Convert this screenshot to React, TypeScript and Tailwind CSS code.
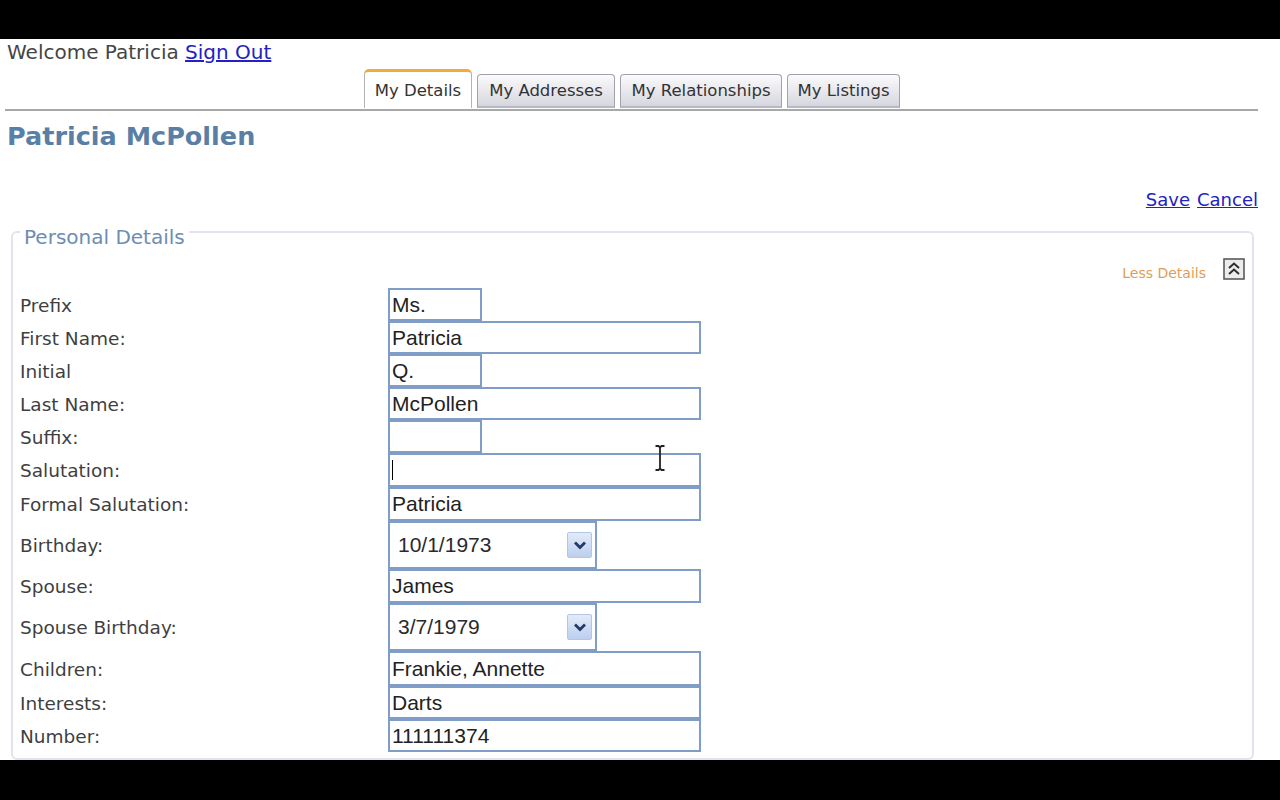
import React from 'react'

type Field = {
  label: string
  value: string
  kind: 'short' | 'long' | 'date'
  h: string
  caret?: boolean
}

const fields: Field[] = [
  { label: 'Prefix', value: 'Ms.', kind: 'short', h: 'h-[33px]' },
  { label: 'First Name:', value: 'Patricia', kind: 'long', h: 'h-[33px]' },
  { label: 'Initial', value: 'Q.', kind: 'short', h: 'h-[33px]' },
  { label: 'Last Name:', value: 'McPollen', kind: 'long', h: 'h-[33px]' },
  { label: 'Suffix:', value: '', kind: 'short', h: 'h-[33px]' },
  { label: 'Salutation:', value: '', kind: 'long', h: 'h-[34px]', caret: true },
  { label: 'Formal Salutation:', value: 'Patricia', kind: 'long', h: 'h-[34px]' },
  { label: 'Birthday:', value: '10/1/1973', kind: 'date', h: 'h-[48px]' },
  { label: 'Spouse:', value: 'James', kind: 'long', h: 'h-[34px]' },
  { label: 'Spouse Birthday:', value: '3/7/1979', kind: 'date', h: 'h-[48px]' },
  { label: 'Children:', value: 'Frankie, Annette', kind: 'long', h: 'h-[35px]' },
  { label: 'Interests:', value: 'Darts', kind: 'long', h: 'h-[33px]' },
  { label: 'Number:', value: '111111374', kind: 'long', h: 'h-[33px]' },
]

const tabs = [
  { name: 'My Details', w: 'w-[108px]', active: true },
  { name: 'My Addresses', w: 'w-[138px]', active: false },
  { name: 'My Relationships', w: 'w-[162px]', active: false },
  { name: 'My Listings', w: 'w-[113px]', active: false },
]

const inputCls =
  "h-full border-2 border-[#7f9dc7] bg-white pl-[2px] text-[21px] text-[#222] font-['Liberation_Sans',Arial,sans-serif] outline-none"

function DateBox({ value }: { value: string }) {
  return (
    <div className="flex h-full w-[209px] items-center justify-between border-2 border-[#7f9dc7] bg-white pl-[8px] pr-[3px]">
      <span className="text-[21px] text-[#2a2a2a] font-['Liberation_Sans',Arial,sans-serif]">{value}</span>
      <span className="flex h-[26px] w-[25px] items-center justify-center rounded-[2px] border border-[#b4c6e4] bg-gradient-to-b from-[#e2ebfa] to-[#bccfee]">
        <svg width="16" height="12" viewBox="0 0 16 12">
          <path d="M3 3.5 L8 8.5 L13 3.5" fill="none" stroke="#24386a" strokeWidth="2.8" />
        </svg>
      </span>
    </div>
  )
}

function FieldInput({ f }: { f: Field }) {
  if (f.kind === 'date') return <DateBox value={f.value} />
  const w = f.kind === 'short' ? 'w-[94px]' : 'w-[313px]'
  return (
    <div className={`relative h-full ${w}`}>
      <input readOnly value={f.value} className={`${inputCls} w-full`} />
      {f.caret ? <span className="absolute left-[4px] top-[7px] h-[20px] w-px bg-black" /> : null}
    </div>
  )
}

export default function App() {
  return (
    <div className="h-[800px] w-[1280px] overflow-hidden bg-black font-['DejaVu_Sans',Verdana,sans-serif]">
      <div className="h-[39px] bg-black" />

      <div className="relative h-[721px] overflow-hidden bg-white">
        {/* welcome */}
        <div className="pl-[7px] text-[20px] leading-[26px] text-[#454545]">
          Welcome Patricia{' '}
          <a href="#" className="text-[#2121c4] underline">Sign Out</a>
        </div>

        {/* tabs */}
        <div className="ml-[5px] mr-[22px] mt-[4px] flex items-end gap-[5px] border-b-2 border-[#a8a8a8] pb-[1px] pl-[359px]">
          {tabs.map((t) =>
            t.active ? (
              <div
                key={t.name}
                className={`${t.w} h-[39px] rounded-t-[5px] border-x border-t-[3px] border-x-[#b4b4b4] border-t-[#f2aa3c] bg-white pt-[6px] text-center text-[16.5px] leading-[26px] text-[#333]`}
              >
                {t.name}
              </div>
            ) : (
              <div
                key={t.name}
                className={`${t.w} h-[34px] rounded-t-[4px] border border-b-2 border-[#a2a2ae] border-b-[#b8b8c4] bg-gradient-to-b from-[#fbfbfd] to-[#d6d6de] pt-[3px] text-center text-[16.5px] leading-[26px] text-[#333]`}
              >
                {t.name}
              </div>
            )
          )}
        </div>

        {/* name */}
        <h1 className="mt-[10px] pl-[7px] text-[25.5px] font-bold leading-[30px] text-[#5a7fa6]">
          Patricia McPollen
        </h1>

        {/* actions */}
        <div className="mr-[22px] mt-[37px] flex justify-end gap-[7px] text-[18px] leading-[24px]">
          <a href="#" className="text-[#2121c4] underline">Save</a>
          <a href="#" className="text-[#2121c4] underline">Cancel</a>
        </div>

        {/* personal details */}
        <fieldset className="ml-[11px] mr-[26px] mt-[5px] rounded-[6px] border-2 border-[#e5e1ef] pb-[6px] pl-[7px] pr-[7px]">
          <legend className="px-[4px] pt-[11px] text-[20px] leading-[19px] text-[#6e8db2]">
            Personal Details
          </legend>

          <div className="mt-[11px] flex h-[22px] items-center justify-end gap-[17px]">
            <span className="pt-[8px] text-[14px] text-[#e29d55]">Less Details</span>
            <svg width="22" height="22" viewBox="0 0 22 22">
              <rect x="1" y="1" width="20" height="20" fill="#ececec" stroke="#5a5a5a" strokeWidth="1.6" />
              <path d="M6 10 L11 5.5 L16 10" fill="none" stroke="#2e2e2e" strokeWidth="2" />
              <path d="M6 16 L11 11.5 L16 16" fill="none" stroke="#2e2e2e" strokeWidth="2" />
            </svg>
          </div>

          <div className="mt-[8px] flex flex-col">
            {fields.map((f) => (
              <div key={f.label} className={`flex items-center ${f.h}`}>
                <div className="w-[368px] pt-[2px] text-[18.5px] text-[#3f3f3f]">{f.label}</div>
                <FieldInput f={f} />
              </div>
            ))}
          </div>
        </fieldset>

        {/* mouse pointer */}
        <svg className="absolute left-[654px] top-[405px]" width="12" height="28" viewBox="0 0 12 28">
          <path d="M1.5 2 H4.5 L6 3.5 L7.5 2 H10.5 M6 3.5 V24.5 M1.5 26 H4.5 L6 24.5 L7.5 26 H10.5" fill="none" stroke="#222" strokeWidth="1.8" />
        </svg>
      </div>

      <div className="h-[40px] bg-black" />
    </div>
  )
}
